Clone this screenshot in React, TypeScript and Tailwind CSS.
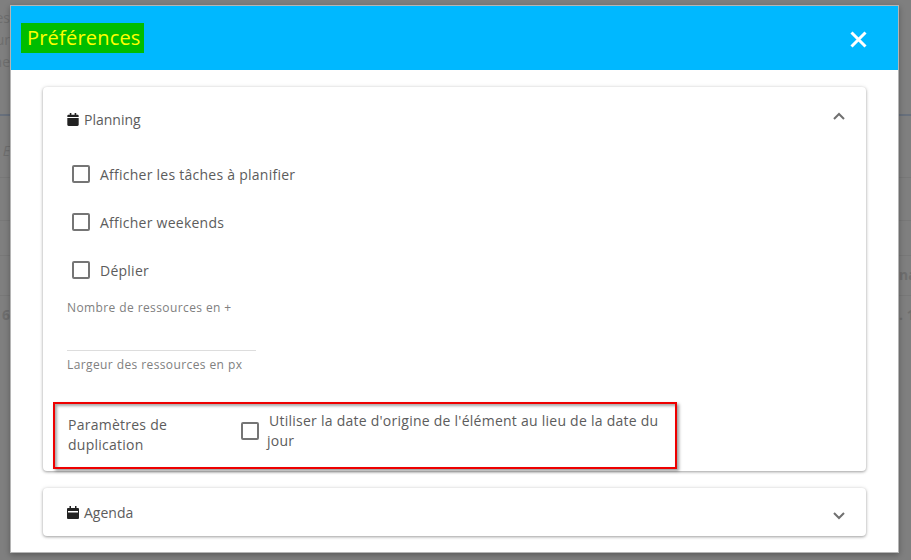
import { FaCalendar } from 'react-icons/fa'

function CheckBox() {
  return <span className="block h-[18px] w-[18px] shrink-0 rounded-[2px] border-2 border-[#757575] bg-white" />
}

function CheckRow({ label }: { label: string }) {
  return (
    <div className="flex h-12 items-center gap-[10px] pl-[29px] text-[14px] tracking-[0.25px] text-[#5c5c5c]">
      <CheckBox />
      <span>{label}</span>
    </div>
  )
}

function AgendaIcon() {
  return (
    <svg width="12" height="13" viewBox="0 0 12 13" className="shrink-0">
      <path d="M2.5 0h1.5v2h4V0h1.5v2H11a1 1 0 0 1 1 1v9a1 1 0 0 1-1 1H1a1 1 0 0 1-1-1V3a1 1 0 0 1 1-1h1.5z" fill="#222" />
      <rect x="1" y="5" width="10" height="1.5" fill="#fff" />
    </svg>
  )
}

function Chevron({ up }: { up?: boolean }) {
  return (
    <svg width="12" height="8" viewBox="0 0 12 8" className={up ? 'mb-[6px] shrink-0' : 'mt-[8px] shrink-0'}>
      <path d={up ? 'M1 7l5-5 5 5' : 'M1 1l5 5 5-5'} fill="none" stroke="#707070" strokeWidth="2" />
    </svg>
  )
}

export default function App() {
  return (
    <div className="relative h-[560px] w-[911px] overflow-hidden bg-[#7f7f7f] font-['Open_Sans',sans-serif]">
      {/* page behind the overlay */}
      <div className="flex h-full justify-between text-[14px] text-[#6e6e6e]">
        <div className="w-[10px] overflow-hidden whitespace-nowrap">
          <div className="flex h-[114px] flex-col items-end pt-[7px] leading-[22px]">
            <span>es</span>
            <span>ur</span>
            <span>ne</span>
          </div>
          <div className="h-[63px] border-t-2 border-[#68707c] pt-6 text-right italic">E</div>
          <div className="h-[43px] border-t border-[#787878]" />
          <div className="h-[35px] border-t border-[#787878]" />
          <div className="h-[40px] border-t border-[#787878]" />
          <div className="border-t border-[#787878] pt-2 text-right font-bold">6</div>
        </div>
        <div className="w-[12px] overflow-hidden whitespace-nowrap">
          <div className="h-[114px]" />
          <div className="h-[63px] border-t-2 border-[#68707c]" />
          <div className="h-[43px] border-t border-[#787878]" />
          <div className="h-[35px] border-t border-[#787878]" />
          <div className="h-[40px] border-t border-[#787878] pt-2 font-bold">na</div>
          <div className="border-t border-[#787878] pt-2 font-bold">. 1</div>
        </div>
      </div>

      {/* dialog */}
      <div className="absolute left-[10px] top-[5px] flex h-[548px] w-[889px] flex-col border border-[#b5b5b5] bg-white shadow-[0_2px_6px_rgba(0,0,0,0.3)]">
        <div className="flex h-[64px] shrink-0 items-center justify-between bg-[#00b8ff] pl-[10px] pr-[31px]">
          <h1 className="flex h-[30px] w-[123px] items-center whitespace-nowrap bg-[#00bd00] px-[6px] text-[20px] tracking-[0.2px] text-[#ffff00]">Préférences</h1>
          <svg width="17" height="17" viewBox="0 0 17 17" className="mt-[2px]">
            <path d="M1.5 1.5l14 14M15.5 1.5l-14 14" stroke="#fff" strokeWidth="3" />
          </svg>
        </div>

        <div className="flex flex-col gap-[17px] px-[32px] pt-[17px]">
          <section className="h-[384px] rounded-[4px] bg-white shadow-[0_1px_3px_rgba(0,0,0,0.35),0_0_5px_rgba(0,0,0,0.08)]">
            <div className="flex h-[63px] items-center justify-between pl-[24px] pr-[21px] text-[14px] text-[#5c5c5c]">
              <span className="mt-[2px] flex items-center gap-[5px]">
                <FaCalendar className="h-[13px] w-[12px] text-[#222]" />
                Planning
              </span>
              <Chevron up />
            </div>
            <CheckRow label="Afficher les tâches à planifier" />
            <CheckRow label="Afficher weekends" />
            <CheckRow label="Déplier" />
            <div className="ml-[24px] mt-[5px] w-[189px] text-[12px] tracking-[0.4px] text-[#808080]">
              <div className="h-[52px] border-b border-[#ddd] leading-[17px]">Nombre de ressources en +</div>
              <div className="mt-[5px] whitespace-nowrap leading-[17px]">Largeur des ressources en px</div>
            </div>
            <div className="ml-[10px] mt-[29px] flex h-[67px] w-[624px] items-start border-2 border-[#ee0000] pl-[13px] pt-[11px] text-[14px] tracking-[0.25px] text-[#5c5c5c] shadow-[2px_2px_3px_rgba(0,0,0,0.4),inset_2px_2px_3px_rgba(0,0,0,0.35)]">
              <div className="w-[173px] shrink-0 leading-[20px]">
                Paramètres de
                <br />
                duplication
              </div>
              <div className="mt-[7px]">
                <CheckBox />
              </div>
              <p className="-mt-[4px] ml-[8px] w-[400px] indent-[2px] leading-[20px]">
                Utiliser la date d'origine de l'élément au lieu de la date du jour
              </p>
            </div>
          </section>

          <section className="flex h-[48px] items-center justify-between rounded-[4px] bg-white pl-[24px] pr-[21px] text-[14px] text-[#5c5c5c] shadow-[0_1px_3px_rgba(0,0,0,0.35),0_0_5px_rgba(0,0,0,0.08)]">
            <span className="flex items-center gap-[5px]">
              <AgendaIcon />
              Agenda
            </span>
            <Chevron />
          </section>
        </div>
      </div>
    </div>
  )
}
